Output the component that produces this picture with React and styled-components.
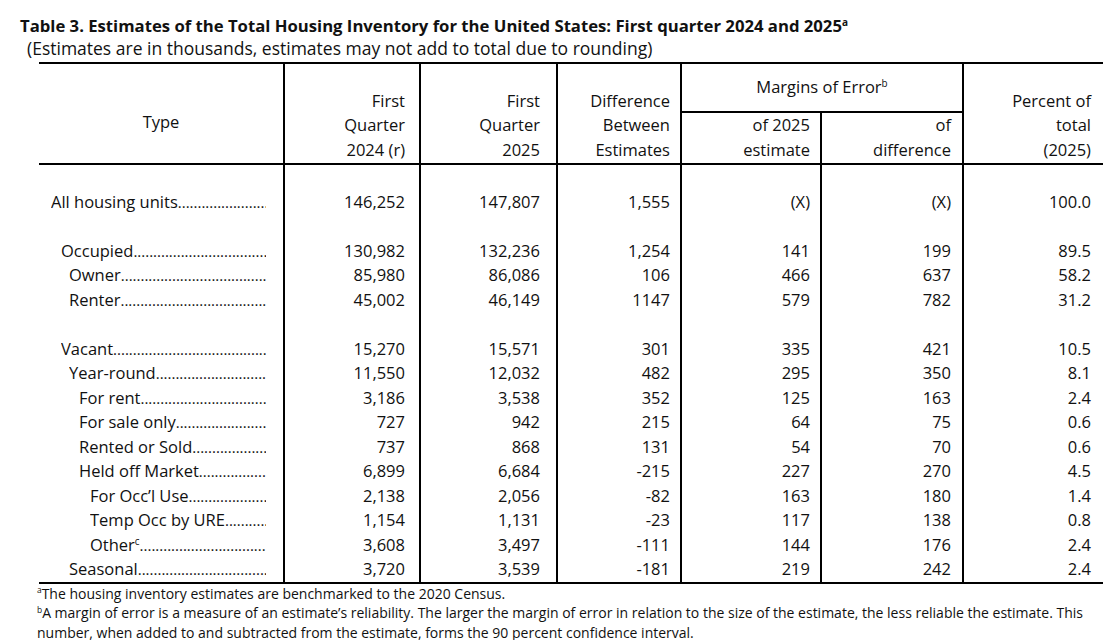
import React from "react";
import styled, { createGlobalStyle } from "styled-components";

const GlobalStyle = createGlobalStyle`
  body {
    margin: 0;
    background: #ffffff;
    color: #111111;
    font-family: "Open Sans", Lato, "Liberation Sans", sans-serif;
  }
`;

const Page = styled.div`
  width: 1111px;
  height: 640px;
  padding-top: 14px;
  box-sizing: border-box;
  overflow: hidden;
`;

const Title = styled.div`
  padding-left: 20px;
  font-size: 16.7px;
  font-weight: 700;
  line-height: 23px;
  white-space: nowrap;
`;

const Subtitle = styled.div`
  padding-left: 27px;
  font-size: 17.5px;
  line-height: 23px;
  margin-bottom: 2px;
  white-space: nowrap;
`;

const Sup = styled.sup`
  font-size: 60%;
  line-height: 0;
  vertical-align: baseline;
  position: relative;
  top: -0.6em;
`;

const Table = styled.table`
  margin-left: 39px;
  width: 1064px;
  table-layout: fixed;
  border-collapse: separate;
  border-spacing: 0;
  font-size: 16.5px;
`;

const HeadCell = styled.th`
  font-weight: 400;
  line-height: 24.5px;
  padding: 0 ${(p) => p.$pad || 0}px 1px 0;
  text-align: ${(p) => p.$align || "right"};
  vertical-align: ${(p) => p.$valign || "bottom"};
  border-top: ${(p) => (p.$top ? "2px solid #000" : "none")};
  border-bottom: ${(p) => (p.$bottom ? "2px solid #000" : "none")};
  border-left: ${(p) => (p.$first ? "none" : "2px solid #000")};
  white-space: nowrap;
`;

const TypeHead = styled(HeadCell)`
  padding-top: 18px;
`;

const Cell = styled.td`
  height: 24.5px;
  line-height: 24.5px;
  padding: 0 ${(p) => p.$pad || 0}px 0 0;
  text-align: right;
  border-left: ${(p) => (p.$first ? "none" : "2px solid #000")};
  border-bottom: ${(p) => (p.$last ? "2px solid #000" : "none")};
  white-space: nowrap;
`;

const LabelCell = styled(Cell)`
  padding: 0 17px 0 ${(p) => p.$indent}px;
  text-align: left;
`;

const Label = styled.div`
  display: flex;
  align-items: baseline;
  height: 24.5px;
  overflow: hidden;
`;

const Leader = styled.span`
  flex: 1;
  overflow: hidden;
  white-space: nowrap;
  font-size: 15px;
  line-height: 15px;
  &::after {
    content: "................................................................................";
  }
`;

const Notes = styled.div`
  padding-left: 37px;
  font-size: 14px;
  line-height: 19.5px;
  white-space: nowrap;
`;

const cols = [244, 136, 137, 124, 140, 142, 141];
const pads = [0, 14, 16, 10, 10, 11, 12];
const indents = [12, 22, 30, 40, 51];

const rows = [
  null,
  { label: "All housing units", level: 0, v: ["146,252", "147,807", "1,555", "(X)", "(X)", "100.0"] },
  null,
  { label: "Occupied", level: 1, v: ["130,982", "132,236", "1,254", "141", "199", "89.5"] },
  { label: "Owner", level: 2, v: ["85,980", "86,086", "106", "466", "637", "58.2"] },
  { label: "Renter", level: 2, v: ["45,002", "46,149", "1147", "579", "782", "31.2"] },
  null,
  { label: "Vacant", level: 1, v: ["15,270", "15,571", "301", "335", "421", "10.5"] },
  { label: "Year-round", level: 2, v: ["11,550", "12,032", "482", "295", "350", "8.1"] },
  { label: "For rent", level: 3, v: ["3,186", "3,538", "352", "125", "163", "2.4"] },
  { label: "For sale only", level: 3, v: ["727", "942", "215", "64", "75", "0.6"] },
  { label: "Rented or Sold", level: 3, v: ["737", "868", "131", "54", "70", "0.6"] },
  { label: "Held off Market", level: 3, v: ["6,899", "6,684", "-215", "227", "270", "4.5"] },
  { label: "For Occ\u2019l Use", level: 4, v: ["2,138", "2,056", "-82", "163", "180", "1.4"] },
  { label: "Temp Occ by URE", level: 4, v: ["1,154", "1,131", "-23", "117", "138", "0.8"] },
  { label: "Other", sup: "c", level: 4, v: ["3,608", "3,497", "-111", "144", "176", "2.4"] },
  { label: "Seasonal", level: 2, v: ["3,720", "3,539", "-181", "219", "242", "2.4"] },
];

const BodyRow = ({ row, last }) => {
  if (!row) {
    return (
      <tr>
        <LabelCell $first $indent={0} />
        {pads.slice(1).map((p, i) => (
          <Cell key={i} $pad={p} />
        ))}
      </tr>
    );
  }
  return (
    <tr>
      <LabelCell $first $last={last} $indent={indents[row.level]}>
        <Label>
          <span>
            {row.label}
            {row.sup && <Sup>{row.sup}</Sup>}
          </span>
          <Leader />
        </Label>
      </LabelCell>
      {row.v.map((val, i) => (
        <Cell key={i} $pad={pads[i + 1]} $last={last}>
          {val}
        </Cell>
      ))}
    </tr>
  );
};

const App = () => {
  return (
    <Page>
      <GlobalStyle />
      <Title>
        Table 3. Estimates of the Total Housing Inventory for the United States: First quarter 2024 and 2025
        <Sup>a</Sup>
      </Title>
      <Subtitle>
        (Estimates are in thousands, estimates may not add to total due to rounding)
      </Subtitle>
      <Table>
        <colgroup>
          {cols.map((w, i) => (
            <col key={i} style={{ width: w }} />
          ))}
        </colgroup>
        <thead>
          <tr style={{ height: 51 }}>
            <TypeHead rowSpan={2} $first $top $bottom $align="center" $valign="middle">
              Type
            </TypeHead>
            <HeadCell rowSpan={2} $top $bottom $pad={pads[1]}>
              First
              <br />
              Quarter
              <br />
              2024 (r)
            </HeadCell>
            <HeadCell rowSpan={2} $top $bottom $pad={pads[2]}>
              First
              <br />
              Quarter
              <br />
              2025
            </HeadCell>
            <HeadCell rowSpan={2} $top $bottom $pad={pads[3]}>
              Difference
              <br />
              Between
              <br />
              Estimates
            </HeadCell>
            <HeadCell colSpan={2} $top $bottom $align="center" $valign="middle">
              Margins of Error<Sup>b</Sup>
            </HeadCell>
            <HeadCell rowSpan={2} $top $bottom $pad={pads[6]}>
              Percent of
              <br />
              total
              <br />
              (2025)
            </HeadCell>
          </tr>
          <tr style={{ height: 49 }}>
            <HeadCell $bottom $pad={pads[4]}>
              of 2025
              <br />
              estimate
            </HeadCell>
            <HeadCell $bottom $pad={pads[5]}>
              of
              <br />
              difference
            </HeadCell>
          </tr>
        </thead>
        <tbody>
          {rows.map((row, i) => (
            <BodyRow key={i} row={row} last={i === rows.length - 1} />
          ))}
        </tbody>
      </Table>
      <Notes>
        <Sup>a</Sup>The housing inventory estimates are benchmarked to the 2020 Census.
        <br />
        <Sup>b</Sup>A margin of error is a measure of an estimate&rsquo;s reliability. The larger the margin of error in
        relation to the size of the estimate, the less reliable the estimate. This
        <br />
        number, when added to and subtracted from the estimate, forms the 90 percent confidence interval.
      </Notes>
    </Page>
  );
};

export default App;
